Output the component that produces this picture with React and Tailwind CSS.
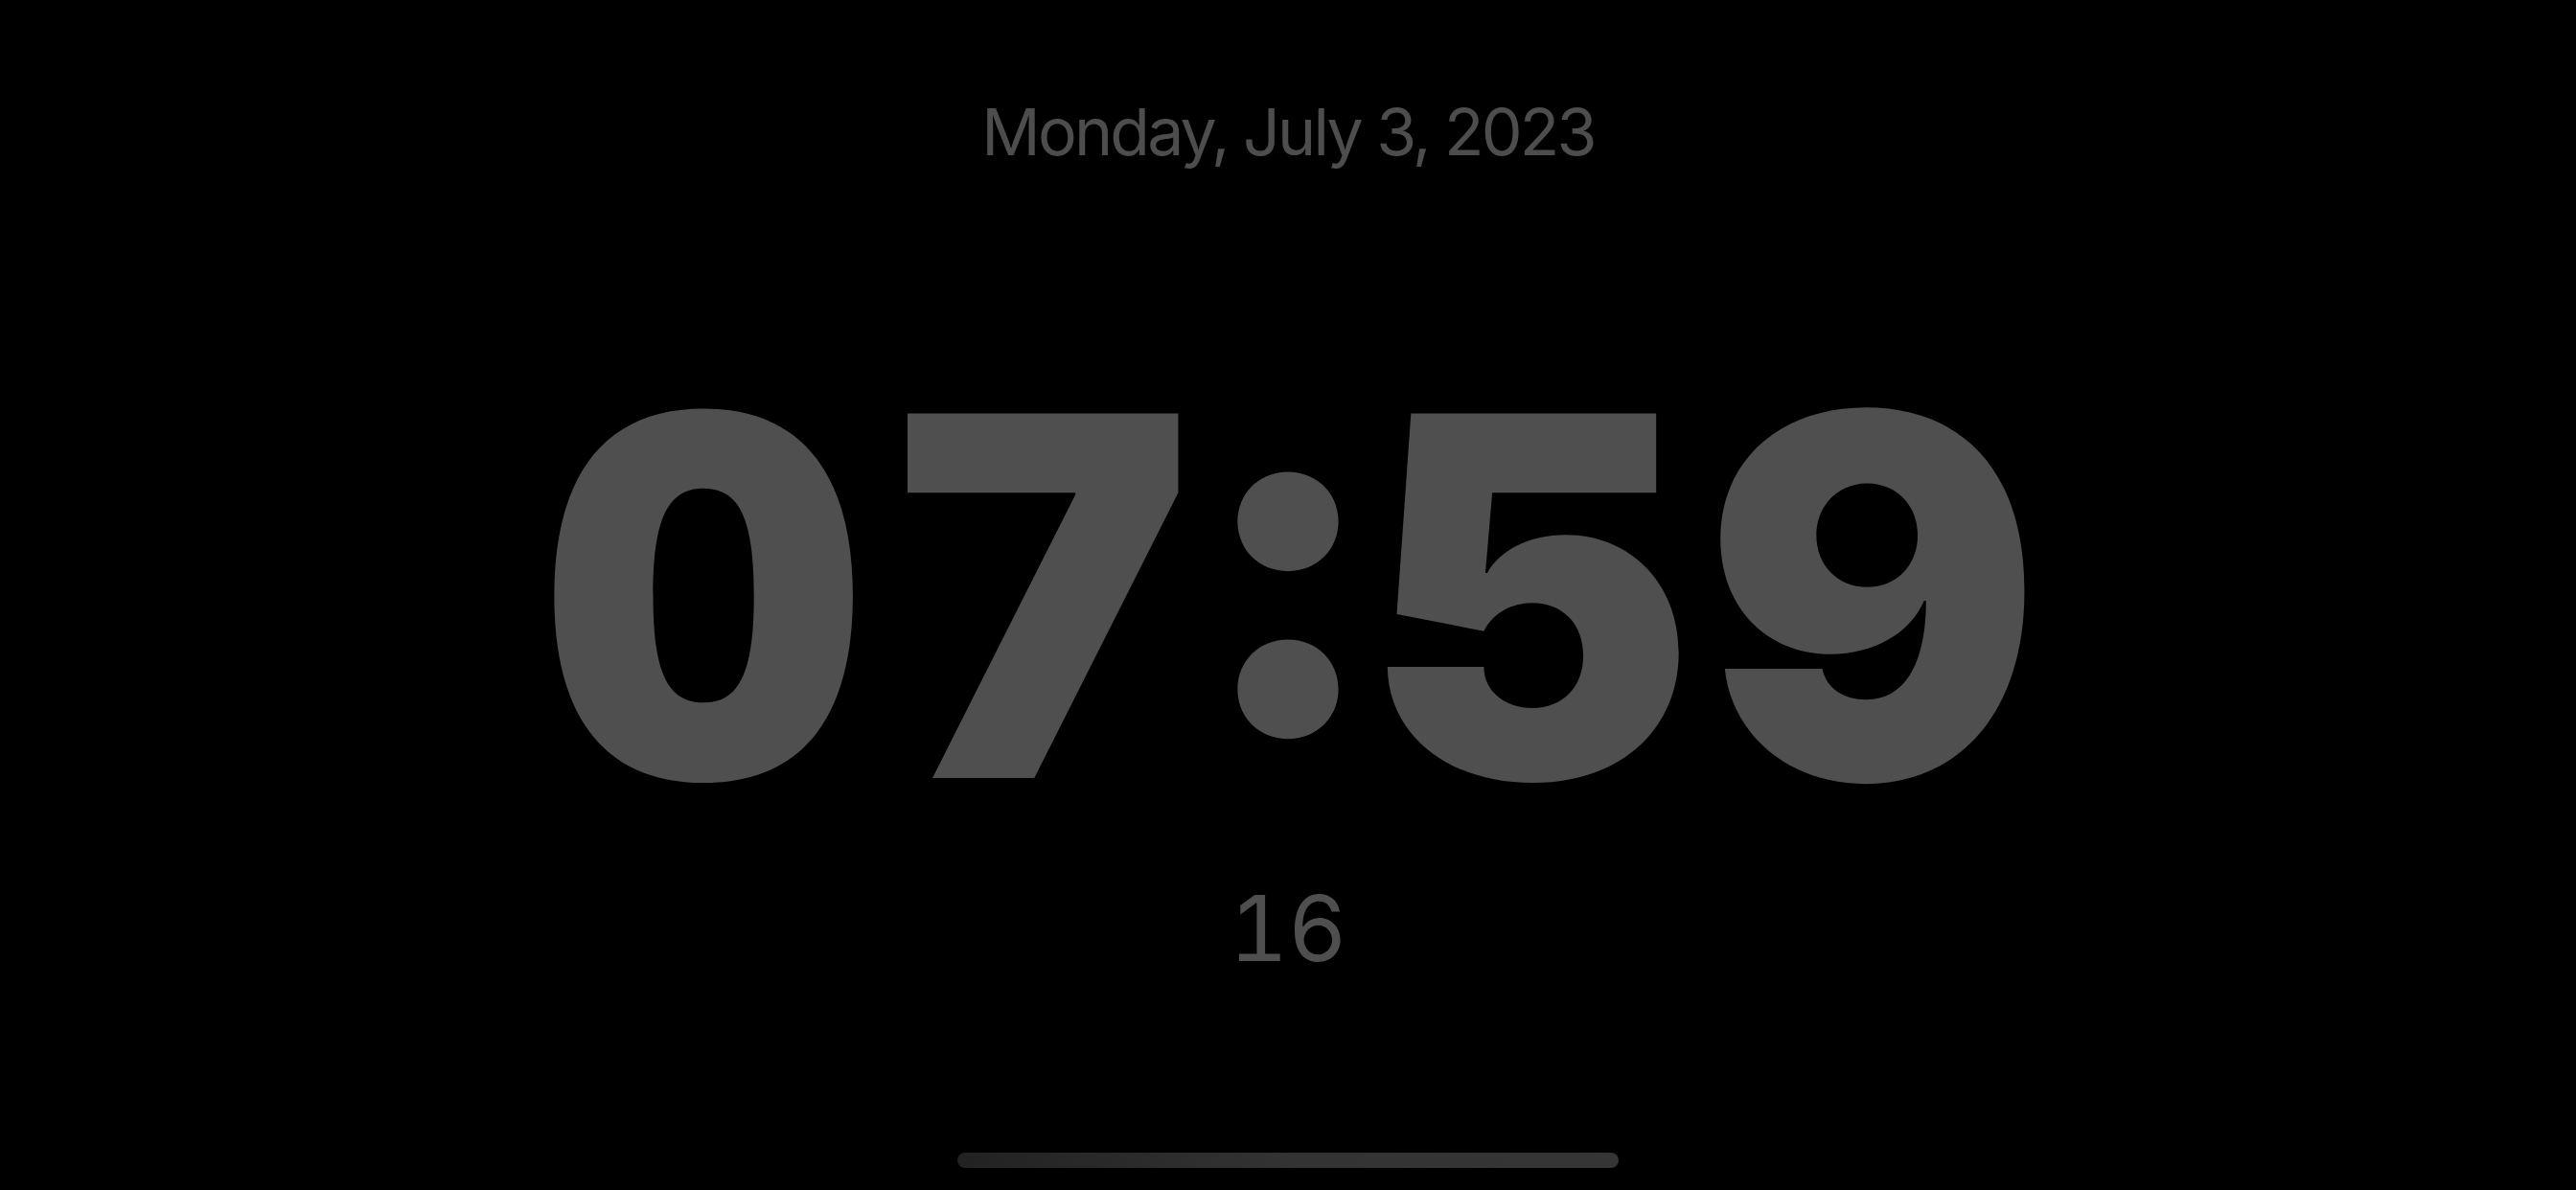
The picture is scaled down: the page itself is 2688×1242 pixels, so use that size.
export default function App() {
  return (
    <div
      className="flex h-[1242px] w-full flex-col items-center overflow-hidden bg-black"
      style={{ fontFamily: "Inter, 'Noto Sans', sans-serif" }}
    >
      <div className="pt-[103px] text-[68px] leading-none tracking-[-2.8px] text-[#4d4d4d]">
        Monday, July 3, 2023
      </div>
      <div className="mt-[189px] pl-[17px] text-[523px] font-[880] leading-none tracking-[17px] text-[#4f4f4f] [font-feature-settings:'case','tnum']">
        07:59
      </div>
      <div className="mt-[38px] text-[95px] leading-none tabular-nums text-[#4f4f4f]">
        16
      </div>
      <div className="mt-[187px] h-[16px] w-[690px] rounded-full bg-gradient-to-r from-[#222] via-[#333] to-[#353535]" />
    </div>
  );
}
